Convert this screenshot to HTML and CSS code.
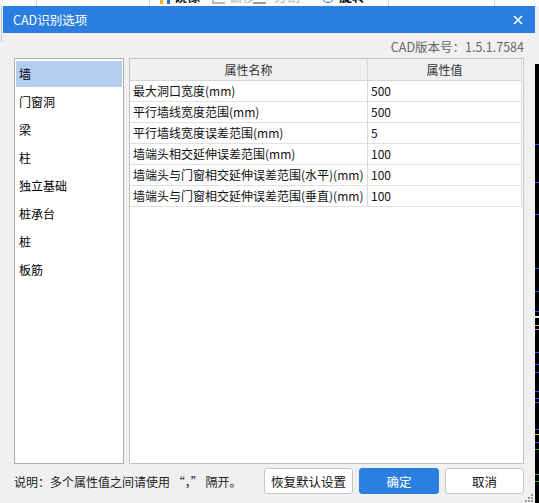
FILE: index.html
```html
<!DOCTYPE html>
<html lang="zh-CN">
<head>
<meta charset="utf-8">
<title>CAD识别选项</title>
<link rel="stylesheet" href="styles.css">
</head>
<body>
<div class="desktop">
  <div class="toolbar">
    <div class="tb-inner">
      <span class="tb-sep s1"></span>
      <span class="tb-sep s2"></span>
      <span class="tb-item dark i1"><span class="tb-ico ico-mirror"></span>镜像</span>
      <span class="tb-item gray i2"><span class="tb-ico ico-offset"></span>偏移</span>
      <span class="tb-item gray i3"><span class="tb-ico ico-split"></span>分割</span>
      <span class="tb-item dark i4"><span class="tb-ico ico-rotate"></span>旋转</span>
      <span class="tb-sep s3"></span>
      <span class="tb-sep s4"></span>
    </div>
  </div>
  <div class="side-left"></div>
  <div class="side-right">
    <span class="tick blue" style="top:80px"></span>
    <span class="tick blue" style="top:118px"></span>
    <span class="tick blue" style="top:150px"></span>
    <span class="tick blue" style="top:204px"></span>
    <span class="tick blue" style="top:227px"></span>
    <span class="tick blue" style="top:247px"></span>
    <span class="tick white" style="top:252px"></span>
    <span class="tick yellow" style="top:261px"></span>
    <span class="tick pink" style="top:265px"></span>
    <span class="tick blue" style="top:288px"></span>
    <span class="tick blue" style="top:300px"></span>
    <span class="tick blue" style="top:308px"></span>
    <span class="tick blue" style="top:327px"></span>
    <span class="tick blue" style="top:334px"></span>
    <span class="tick blue" style="top:338px"></span>
    <span class="tick blue" style="top:365px"></span>
    <span class="tick yellow" style="top:370px"></span>
    <span class="tick blue" style="top:378px"></span>
    <span class="tick green" style="top:385px"></span>
    <span class="tick green" style="top:410px"></span>
    <span class="tick green" style="top:417px"></span>
  </div>

  <div class="dialog">
    <div class="titlebar">
      <span class="title">CAD识别选项</span>
      <span class="close">
        <svg width="10" height="10" viewBox="0 0 10 10"><path d="M1 1 L9 9 M9 1 L1 9" stroke="#fff" stroke-width="1.6" fill="none"/></svg>
      </span>
    </div>
    <div class="content">
      <div class="version">CAD版本号：1.5.1.7584</div>
      <div class="panels">
        <ul class="cat-list">
          <li class="cat selected">墙</li>
          <li class="cat">门窗洞</li>
          <li class="cat">梁</li>
          <li class="cat">柱</li>
          <li class="cat">独立基础</li>
          <li class="cat">桩承台</li>
          <li class="cat">桩</li>
          <li class="cat">板筋</li>
        </ul>
        <div class="table-panel">
          <div class="grid">
            <div class="hcell">属性名称</div>
            <div class="hcell">属性值</div>
            <div class="cell">最大洞口宽度(mm)</div>
            <div class="cell">500</div>
            <div class="cell">平行墙线宽度范围(mm)</div>
            <div class="cell">500</div>
            <div class="cell">平行墙线宽度误差范围(mm)</div>
            <div class="cell">5</div>
            <div class="cell">墙端头相交延伸误差范围(mm)</div>
            <div class="cell">100</div>
            <div class="cell">墙端头与门窗相交延伸误差范围(水平)(mm)</div>
            <div class="cell">100</div>
            <div class="cell">墙端头与门窗相交延伸误差范围(垂直)(mm)</div>
            <div class="cell">100</div>
          </div>
        </div>
      </div>
      <div class="footer">
        <span class="note">说明：多个属性值之间请使用 “，” 隔开。</span>
        <div class="buttons">
          <button class="btn btn-reset">恢复默认设置</button>
          <button class="btn btn-primary">确定</button>
          <button class="btn btn-cancel">取消</button>
        </div>
      </div>
    </div>
    <span class="grip">
      <svg width="9" height="9" viewBox="0 0 9 9">
        <rect x="7" y="1" width="2" height="2" fill="#9a9a9a"/>
        <rect x="4" y="4" width="2" height="2" fill="#9a9a9a"/>
        <rect x="7" y="4" width="2" height="2" fill="#9a9a9a"/>
        <rect x="1" y="7" width="2" height="2" fill="#9a9a9a"/>
        <rect x="4" y="7" width="2" height="2" fill="#9a9a9a"/>
        <rect x="7" y="7" width="2" height="2" fill="#9a9a9a"/>
      </svg>
    </span>
  </div>
</div>
</body>
</html>
```

FILE: styles.css
```css
* { box-sizing: border-box; }
html, body { margin: 0; padding: 0; }
body {
  width: 539px;
  height: 503px;
  overflow: hidden;
  background: #f0f0f0;
  font-family: "Noto Sans CJK SC", "Noto Sans", sans-serif;
  font-size: 12px;
  color: #000;
}
.desktop {
  position: relative;
  width: 539px;
  height: 503px;
  overflow: hidden;
  background: #f0f0f0;
}

/* background toolbar (mostly hidden under the dialog) */
.toolbar {
  height: 6px;
  background: #fbfbfb;
  overflow: hidden;
  position: relative;
}
.tb-inner {
  position: relative;
  height: 20px;
  margin-top: -14px;
}
.tb-item {
  position: absolute;
  top: 0;
  height: 20px;
  line-height: 20px;
  font-size: 13px;
  font-weight: bold;
  display: flex;
  align-items: center;
  gap: 4px;
}
.tb-item.dark { color: #111; }
.tb-item.gray { color: #b0b0b0; font-weight: normal; }
.i1 { left: 160px; }
.i2 { left: 212px; }
.i3 { left: 257px; }
.i4 { left: 321px; }
.tb-ico { display: inline-block; width: 13px; height: 16px; }
.ico-mirror { border-left: 3px solid #f2b400; border-right: 3px solid #2d6fd0; width: 10px; }
.ico-offset { border-left: 2px solid #bbb; border-bottom: 2px solid #bbb; }
.ico-split { border-bottom: 2px solid #999; transform: skewX(-30deg); }
.ico-rotate { border: 1.5px solid #3a6fc8; border-radius: 50%; height: 14px; width: 14px; }
.tb-sep { position: absolute; top: 0; width: 1px; height: 20px; background: #d0d0d0; }
.s1 { left: 36px; }
.s2 { left: 149px; }
.s3 { left: 388px; }
.s4 { left: 494px; }

.side-left {
  position: absolute;
  left: 1px;
  top: 6px;
  width: 1px;
  height: 36px;
  background: #c8c8c8;
}
.side-right {
  position: absolute;
  left: 535px;
  top: 64px;
  width: 4px;
  bottom: 0;
  background: #000;
}
.tick { position: absolute; left: 0; width: 4px; height: 1px; }
.tick.blue { background: #2a4cff; }
.tick.green { background: #27b327; }
.tick.yellow { background: #d6c24a; }
.tick.white { background: #e8e8e8; height: 2px; }
.tick.pink { background: #d879d8; }

/* dialog window */
.dialog {
  position: absolute;
  left: 3px;
  top: 6px;
  width: 532px;
  height: 520px;
  background: #f0f0f0;
  display: flex;
  flex-direction: column;
}
.titlebar {
  height: 27px;
  background: #2b7ee0;
  display: flex;
  align-items: center;
  justify-content: space-between;
  padding: 0 12px 0 10px;
  color: #fff;
}
.title { font-size: 12.5px; line-height: 27px; }
.close { display: flex; align-items: center; }

.content {
  padding: 0 11px;
  display: flex;
  flex-direction: column;
}
.version {
  height: 25px;
  line-height: 25px;
  text-align: right;
  color: #666;
  font-size: 12.5px;
  padding-right: 0;
  padding-top: 1px;
}
.panels {
  display: flex;
  gap: 5px;
  height: 406px;
}
.cat-list {
  list-style: none;
  margin: 0;
  width: 110px;
  height: 406px;
  border: 1px solid #adadad;
  background: #fff;
  padding: 2px 1px;
}
.cat {
  height: 26px;
  line-height: 26px;
  margin-bottom: 2px;
  padding-left: 3px;
  font-size: 12px;
}
.cat.selected { background: #b3cdef; }

.table-panel {
  width: 395px;
  height: 406px;
  border: 1px solid #c4c4c4;
  background: #fff;
}
.grid {
  display: grid;
  grid-template-columns: 238px 154px;
}
.hcell, .cell {
  border-right: 1px solid #d9d9d9;
  border-bottom: 1px solid #e0e0e0;
  white-space: nowrap;
  overflow: hidden;
}
.hcell {
  height: 22px;
  line-height: 21px;
  background: #f0f0f0;
  text-align: center;
  color: #333;
  border-bottom-color: #d4d4d4;
}
.cell {
  height: 21px;
  line-height: 20px;
  padding-left: 3px;
  color: #111;
}

.footer {
  margin-top: 4px;
  height: 26px;
  display: flex;
  align-items: center;
  justify-content: space-between;
}
.note { color: #222; font-size: 12px; padding-left: 0; }
.buttons { display: flex; gap: 6px; }
.btn {
  height: 26px;
  font-family: "Noto Sans CJK SC", "Noto Sans", sans-serif;
  font-size: 12.5px;
  border: 1px solid #c8c8c8;
  border-radius: 3px;
  background: #fff;
  color: #111;
  padding: 0;
  cursor: pointer;
}
.btn-reset { width: 89px; }
.btn-primary { width: 80px; background: #2b7fe0; border-color: #2b7fe0; color: #fff; }
.btn-cancel { width: 79px; }

.grip {
  position: absolute;
  left: 521px;
  top: 487px;
  width: 9px;
  height: 9px;
  display: flex;
}
```
